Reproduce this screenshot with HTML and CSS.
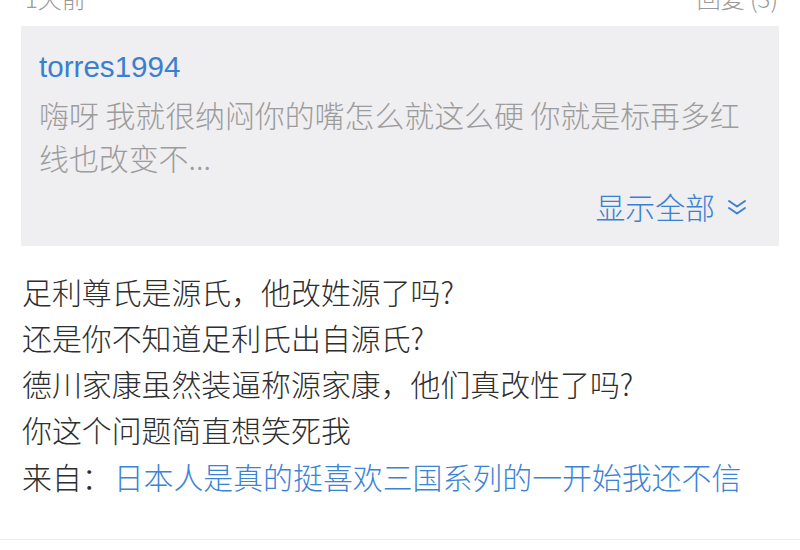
FILE: index.html
```html
<!DOCTYPE html>
<html lang="zh-CN">
<head>
<meta charset="utf-8">
<link rel="stylesheet" href="styles.css">
</head>
<body>
<div class="page">
  <div class="meta">
    <span class="meta-time">1天前</span>
    <span class="meta-reply">回复 (3)</span>
  </div>
  <div class="quote">
    <div class="quote-user">torres1994</div>
    <div class="quote-text">嗨呀 我就很纳闷你的嘴怎么就这么硬 你就是标再多红线也改变不...</div>
    <div class="quote-more">
      <span>显示全部</span>
      <svg class="chev" width="20" height="16" viewBox="0 0 20 16" aria-hidden="true">
        <path d="M2 2 L10 7.5 L18 2 M2 9 L10 14.5 L18 9" fill="none" stroke="#3d82d2" stroke-width="2" stroke-linecap="round" stroke-linejoin="round"/>
      </svg>
    </div>
  </div>
  <div class="body">
    <p>足利尊氏是源氏，他改姓源了吗?</p>
    <p>还是你不知道足利氏出自源氏?</p>
    <p>德川家康虽然装逼称源家康，他们真改性了吗?</p>
    <p>你这个问题简直想笑死我</p>
    <p class="from">来自：<a class="from-link">日本人是真的挺喜欢三国系列的一开始我还不信</a></p>
  </div>
  <div class="divider"></div>
</div>
</body>
</html>
```

FILE: styles.css
```css
* { box-sizing: border-box; }
html, body {
  margin: 0;
  padding: 0;
  background: #ffffff;
  overflow: hidden;
}
.page {
  width: 800px;
  height: 550px;
  overflow: hidden;
  font-family: "Noto Sans CJK SC", "Noto Sans", sans-serif;
  font-weight: 300;
  font-size: 29.9px;
  color: #2e2e2e;
}
.meta {
  display: flex;
  justify-content: space-between;
  margin: -14px 22px 0 25px;
  font-size: 24px;
  line-height: 24px;
  color: #9a9a9a;
}
.quote {
  margin: 16px 21px 0 21px;
  background: #efeef0;
  padding: 21px 32px 18px 18px;
}
.quote-user {
  font-family: "Liberation Sans", Arial, sans-serif;
  font-weight: 400;
  font-size: 29.6px;
  line-height: 40px;
  color: #3a7fd0;
}
.quote-text {
  margin-top: 6px;
  line-height: 42.5px;
  color: #9c9c9c;
}
.quote-more {
  margin-top: 7px;
  display: flex;
  justify-content: flex-end;
  align-items: center;
  gap: 12px;
  line-height: 42.5px;
  color: #3a80d2;
}
.chev { display: block; margin-top: 1px; }
.body {
  margin-top: 22px;
  padding-left: 22px;
}
.body p {
  margin: 0;
  line-height: 46.3px;
}
.from-link { color: #3b83d5; margin-left: 2px; }
.divider {
  margin-top: 40px;
  height: 1px;
  background: #ececec;
}
```
